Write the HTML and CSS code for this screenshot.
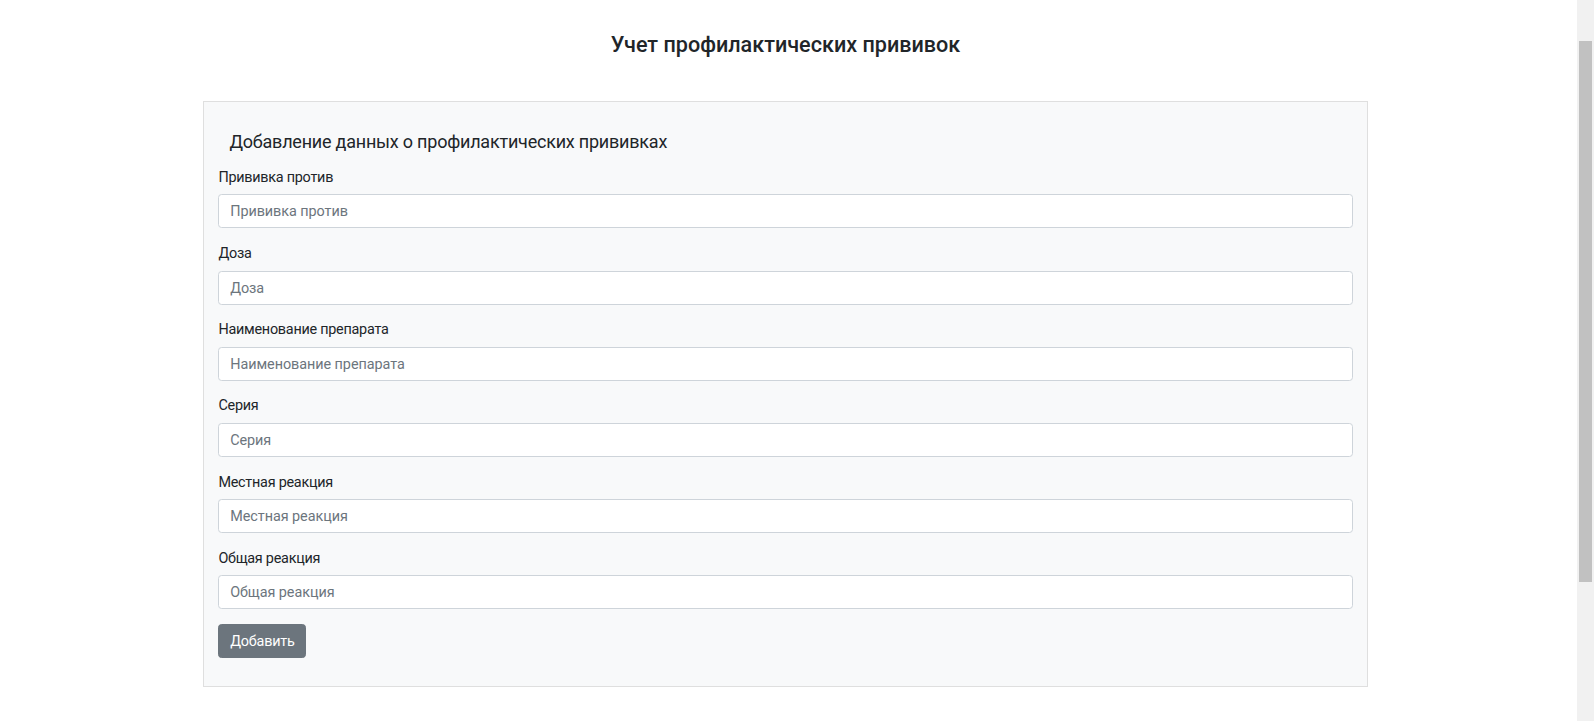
FILE: index.html
```html
<!DOCTYPE html>
<html lang="ru">
<head>
<meta charset="utf-8">
<title>Учет профилактических прививок</title>
<link rel="stylesheet" href="styles.css">
</head>
<body>
<div class="page">
  <main class="container">
    <h1 class="title">Учет профилактических прививок</h1>
    <section class="card">
      <h2 class="card-title">Добавление данных о профилактических прививках</h2>
      <form class="form">
        <div class="field">
          <label class="label">Прививка против</label>
          <input class="input" type="text" placeholder="Прививка против">
        </div>
        <div class="field">
          <label class="label">Доза</label>
          <input class="input" type="text" placeholder="Доза">
        </div>
        <div class="field">
          <label class="label">Наименование препарата</label>
          <input class="input" type="text" placeholder="Наименование препарата">
        </div>
        <div class="field">
          <label class="label">Серия</label>
          <input class="input" type="text" placeholder="Серия">
        </div>
        <div class="field">
          <label class="label">Местная реакция</label>
          <input class="input" type="text" placeholder="Местная реакция">
        </div>
        <div class="field field-last">
          <label class="label">Общая реакция</label>
          <input class="input" type="text" placeholder="Общая реакция">
        </div>
        <div class="actions">
          <button class="btn" type="button">Добавить</button>
        </div>
      </form>
    </section>
  </main>
</div>
<div class="scrollbar"><div class="thumb"></div></div>
</body>
</html>
```

FILE: styles.css
```css
html, body {
  margin: 0;
  padding: 0;
  height: 721px;
  overflow: hidden;
}
body {
  display: flex;
  background: #fff;
  font-family: Roboto, "Open Sans", sans-serif;
  color: #212529;
}
.page {
  flex: 1;
  min-width: 0;
}
.container {
  width: 1165px;
  margin-left: 203px;
  padding-top: 31.6px;
}
.title {
  margin: 0;
  text-align: center;
  font-size: 21.6px;
  line-height: 25.92px;
  font-weight: 500;
  color: #212529;
}
.card {
  margin-top: 43.5px;
  border: 1px solid #dfdfdf;
  background: #f8f9fa;
  padding: 28.5px 14.4px 28px 14.4px;
}
.card-title {
  margin: 0 0 13.5px 0;
  padding-left: 11px;
  font-size: 18px;
  line-height: 21.6px;
  font-weight: 400;
  letter-spacing: -0.22px;
  color: #212529;
}
.form {
  display: flex;
  flex-direction: column;
}
.field {
  display: flex;
  flex-direction: column;
  margin-bottom: 13.4px;
}
.field-last {
  margin-bottom: 14.6px;
}
.label {
  display: block;
  font-size: 14.4px;
  line-height: 21.6px;
  padding-top: 1.3px;
  margin-bottom: 5.9px;
  letter-spacing: -0.25px;
  color: #212529;
}
.input {
  box-sizing: border-box;
  height: 34px;
  width: 100%;
  border: 1px solid #ced4da;
  border-radius: 3.6px;
  background: #fff;
  padding: 1px 10.8px 0 10.8px;
  font-family: inherit;
  font-size: 14.4px;
  letter-spacing: -0.05px;
  color: #212529;
  outline: none;
}
.input::placeholder {
  color: #6c757d;
  opacity: 1;
}
.actions {
  display: flex;
}
.btn {
  box-sizing: border-box;
  height: 34px;
  padding: 1px 10.8px 0 10.8px;
  border: 1px solid #6c757d;
  border-radius: 3.6px;
  background: #6c757d;
  color: #fff;
  font-family: inherit;
  font-size: 14.4px;
  line-height: 21.6px;
  letter-spacing: -0.2px;
}
.scrollbar {
  width: 17px;
  flex: none;
  height: 721px;
  background: #f1f1f1;
  display: flex;
  flex-direction: column;
}
.thumb {
  margin: 41px 2px 0 2px;
  height: 541px;
  background: #c1c1c1;
}
```
